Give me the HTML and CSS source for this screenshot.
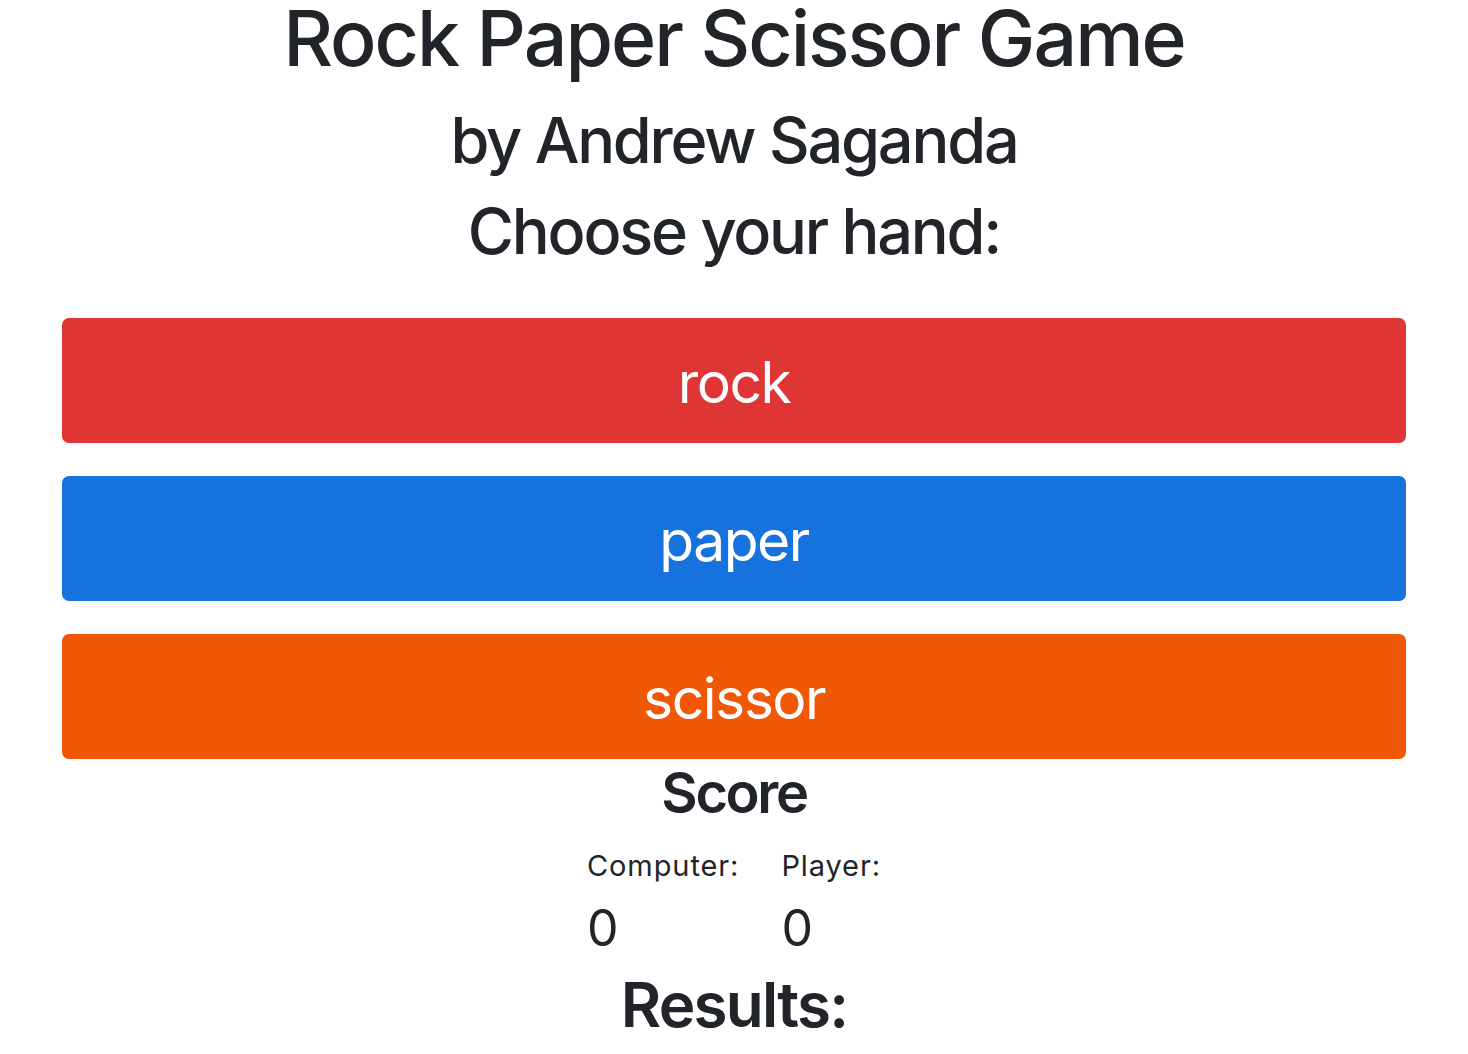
FILE: index.html
```html
<!DOCTYPE html>
<html lang="en">
<head>
<meta charset="utf-8">
<title>Rock Paper Scissor Game</title>
<link rel="stylesheet" href="styles.css">
</head>
<body>
<main class="game">
  <h1 class="title">Rock Paper Scissor Game</h1>
  <h2 class="subtitle">by Andrew Saganda</h2>
  <h2 class="prompt">Choose your hand:</h2>
  <div class="choices">
    <button class="choice choice-rock">rock</button>
    <button class="choice choice-paper">paper</button>
    <button class="choice choice-scissor">scissor</button>
  </div>
  <h3 class="score-title">Score</h3>
  <div class="scoreboard">
    <div class="score-col">
      <div class="score-label">Computer:</div>
      <div class="score-value">0</div>
    </div>
    <div class="score-col">
      <div class="score-label">Player:</div>
      <div class="score-value">0</div>
    </div>
  </div>
  <h2 class="results">Results:</h2>
</main>
</body>
</html>
```
FILE: styles.css
```css
* { box-sizing: border-box; }
html, body { margin: 0; padding: 0; background: #fff; }
body {
  font-family: Inter, "Noto Sans", "Liberation Sans", sans-serif;
  color: #212529;
}
.game {
  padding: 0 62px;
  display: flex;
  flex-direction: column;
  text-align: center;
}
h1, h2, h3 { margin: 0; }
.title {
  font-size: 77px;
  line-height: 77px;
  font-weight: 500;
  letter-spacing: -2px;
}
.subtitle {
  margin-top: 32px;
  font-size: 63px;
  line-height: 63px;
  font-weight: 500;
  letter-spacing: -2.2px;
}
.prompt {
  margin-top: 28px;
  font-size: 63px;
  line-height: 63px;
  font-weight: 500;
  letter-spacing: -2.2px;
}
.choices {
  margin-top: 55px;
  display: flex;
  flex-direction: column;
  gap: 33px;
}
.choice {
  height: 125px;
  border: none;
  border-radius: 7px;
  color: #fff;
  font-family: inherit;
  font-size: 57px;
  font-weight: 400;
  letter-spacing: -1.5px;
  display: flex;
  align-items: center;
  justify-content: center;
  padding: 4px 0 0;
}
.choice-rock { background: #e03535; }
.choice-paper { background: #1672dc; }
.choice-scissor { background: #f05806; }
.score-title {
  margin-top: 6px;
  font-size: 56px;
  line-height: 57px;
  font-weight: 600;
  letter-spacing: -2.4px;
}
.scoreboard {
  margin-top: 29px;
  display: flex;
  justify-content: center;
  gap: 42px;
  text-align: left;
}
.score-col {
  display: flex;
  flex-direction: column;
}
.score-label {
  font-size: 29px;
  line-height: 29px;
  letter-spacing: 0.9px;
}
.score-value {
  margin-top: 23px;
  font-size: 50px;
  line-height: 50px;
  font-weight: 400;
}
.results {
  margin-top: 21px;
  font-size: 62px;
  line-height: 62px;
  font-weight: 600;
  letter-spacing: -1.8px;
}
```
